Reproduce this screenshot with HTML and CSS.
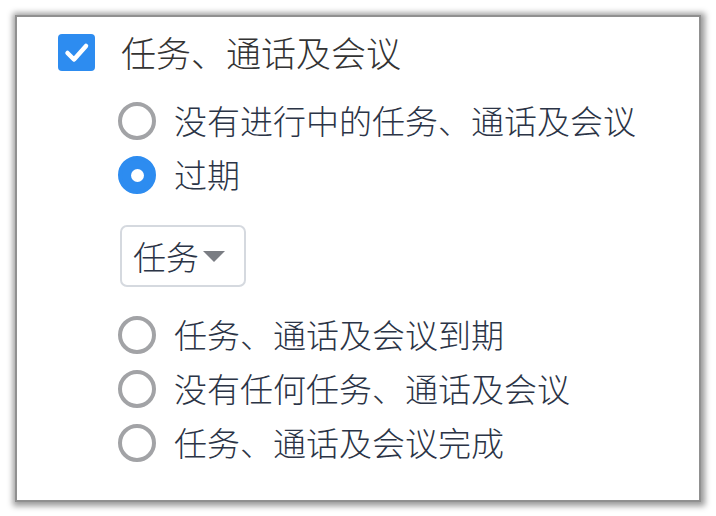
FILE: index.html
```html
<!DOCTYPE html>
<html lang="zh-CN">
<head>
<meta charset="utf-8">
<title>任务、通话及会议</title>
<link rel="stylesheet" href="styles.css">
</head>
<body>
<div class="panel">
  <div class="title-row">
    <span class="checkbox">
      <svg width="37" height="37" viewBox="0 0 37 37"><polyline points="9.5,19 16,25.5 28,12" fill="none" stroke="#fff" stroke-width="4.5" stroke-linecap="round" stroke-linejoin="round"/></svg>
    </span>
    <span class="title">任务、通话及会议</span>
  </div>
  <div class="options">
    <div class="opt"><span class="radio"></span><span class="label">没有进行中的任务、通话及会议</span></div>
    <div class="opt"><span class="radio on"></span><span class="label">过期</span></div>
    <div class="select">
      <span class="select-text">任务</span>
      <svg class="caret" width="22" height="12" viewBox="0 0 22 12"><polygon points="0,0 22,0 11,11" fill="#7a7d83"/></svg>
    </div>
    <div class="opt first-after"><span class="radio"></span><span class="label">任务、通话及会议到期</span></div>
    <div class="opt"><span class="radio"></span><span class="label">没有任何任务、通话及会议</span></div>
    <div class="opt"><span class="radio"></span><span class="label">任务、通话及会议完成</span></div>
  </div>
</div>
</body>
</html>
```

FILE: styles.css
```css
* { box-sizing: border-box; }
html, body { margin: 0; padding: 0; background: #ffffff; }
body {
  width: 716px;
  height: 516px;
  overflow: hidden;
  font-family: "Microsoft YaHei", "Noto Sans CJK SC", "Noto Sans", sans-serif;
  padding: 15px 0 0 15px;
}
.panel {
  width: 686px;
  height: 487px;
  border: 2px solid #909090;
  box-shadow: 1px 1px 6px 3px rgba(0,0,0,0.4);
  background: #fff;
  padding: 17px 0 0 41px;
}
.title-row {
  display: flex;
  align-items: center;
  height: 37px;
}
.checkbox {
  width: 37px;
  height: 37px;
  border-radius: 4px;
  background: #2d8cf0;
  display: flex;
  flex: none;
}
.title {
  margin-left: 26px;
  font-size: 35px;
  font-weight: 300;
  line-height: 37px;
  color: #333333;
  position: relative;
  top: -1px;
}
.options {
  margin-top: 23px;
  margin-left: 60px;
  display: flex;
  flex-direction: column;
  align-items: flex-start;
}
.opt {
  display: flex;
  align-items: center;
  height: 54px;
}
.radio {
  width: 38px;
  height: 38px;
  border-radius: 50%;
  border: 4px solid #a2a3a6;
  flex: none;
  display: flex;
  align-items: center;
  justify-content: center;
}
.radio.on {
  border-color: #2d8cf0;
  background: #2d8cf0;
}
.radio.on::after {
  content: "";
  width: 13px;
  height: 13px;
  border-radius: 50%;
  background: #fff;
}
.label {
  margin-left: 18px;
  font-size: 33px;
  font-weight: 300;
  line-height: 40px;
  color: #2b3446;
  position: relative;
  top: -1px;
}
.select {
  margin-top: 23px;
  margin-left: 2px;
  width: 126px;
  height: 62px;
  border: 2px solid #d5d9df;
  border-radius: 7px;
  display: flex;
  align-items: center;
  padding-left: 11px;
}
.select-text {
  font-size: 33px;
  font-weight: 300;
  line-height: 40px;
  color: #2b3446;
}
.caret {
  margin-left: 4px;
  margin-top: 2px;
}
.first-after { margin-top: 21px; }
```
